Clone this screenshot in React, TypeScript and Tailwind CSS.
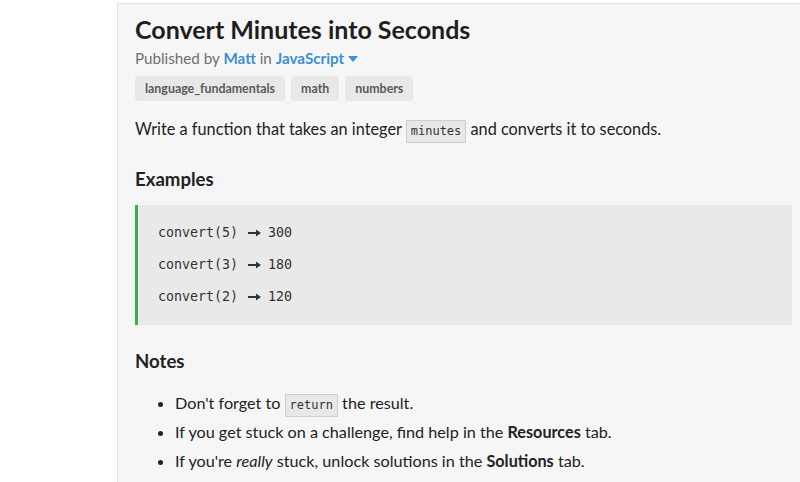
import React from "react";

const mono = { fontFamily: '"DejaVu Sans Mono", "Liberation Mono", monospace' };

function InlineCode({ children }: { children: React.ReactNode }) {
  return (
    <code
      className="inline-block h-[23px] px-[4px] border border-[#cfcfcf] bg-[#e8e8e8] text-[12px] leading-[21px] text-[#333] align-baseline"
      style={mono}
    >
      {children}
    </code>
  );
}

function Arrow() {
  return (
    <svg width="13" height="8" viewBox="0 0 13 8" className="inline-block ml-[10px] mr-[7px]">
      <rect x="0" y="3" width="9" height="2" fill="#333" />
      <path d="M8 0.5 L13 4 L8 7.5 Z" fill="#333" />
    </svg>
  );
}

export default function App() {
  const examples = [
    ["convert(5)", "300"],
    ["convert(3)", "180"],
    ["convert(2)", "120"],
  ];
  return (
    <div
      className="w-[800px] h-[482px] overflow-hidden bg-white"
      style={{ fontFamily: 'Lato, "Open Sans", sans-serif' }}
    >
      <div className="ml-[117px] mt-[3px] h-[479px] border-l border-t border-[#e2e2e2] bg-[#f6f6f6] pl-[17px] pr-[8px] pt-[10px] text-[#222]">
        <h1 className="text-[25px] font-bold leading-[30px] text-[#1e1e1e]">
          Convert Minutes into Seconds
        </h1>
        <div className="mt-[5px] text-[15.2px] leading-[18px] text-[#6f6f6f] flex items-center">
          <span>Published by&nbsp;</span>
          <span className="font-bold text-[#3d8fd6]">Matt</span>
          <span>&nbsp;in&nbsp;</span>
          <span className="font-bold text-[#3d8fd6]">JavaScript</span>
          <svg width="10" height="6" viewBox="0 0 10 6" className="ml-[4px] mt-[1px]">
            <path d="M0 0 L10 0 L5 6 Z" fill="#3d8fd6" />
          </svg>
        </div>
        <div className="mt-[9px] flex gap-[6px]">
          {["language_fundamentals", "math", "numbers"].map((t) => (
            <span
              key={t}
              className="h-[25px] px-[10px] rounded-[4px] bg-[#e8e8e8] text-[12.4px] font-bold leading-[25px] text-[#5a5a5a]"
            >
              {t}
            </span>
          ))}
        </div>
        <p className="mt-[16px] text-[16.3px] leading-[24px]">
          Write a function that takes an integer <InlineCode>minutes</InlineCode> and converts it to seconds.
        </p>
        <h2 className="mt-[25px] text-[18.6px] font-bold leading-[23px]">Examples</h2>
        <div className="mt-[14px] h-[120px] border-l-[3px] border-[#34b04f] bg-[#e9e9e9] pl-[20px] pt-[12px]">
          {examples.map(([a, b]) => (
            <div key={a} className="h-[32px] flex items-center text-[13.3px] leading-[32px] text-[#333] whitespace-pre" style={mono}>
              <span>{a}</span>
              <Arrow />
              <span>{b}</span>
            </div>
          ))}
        </div>
        <h2 className="mt-[25px] text-[18.6px] font-bold leading-[23px]">Notes</h2>
        <ul className="mt-[15px] list-disc pl-[40px] text-[16.2px] leading-[29px]">
          <li>
            Don't forget to <InlineCode>return</InlineCode> the result.
          </li>
          <li>
            If you get stuck on a challenge, find help in the <b>Resources</b> tab.
          </li>
          <li>
            If you're <i>really</i> stuck, unlock solutions in the <b>Solutions</b> tab.
          </li>
        </ul>
      </div>
    </div>
  );
}
